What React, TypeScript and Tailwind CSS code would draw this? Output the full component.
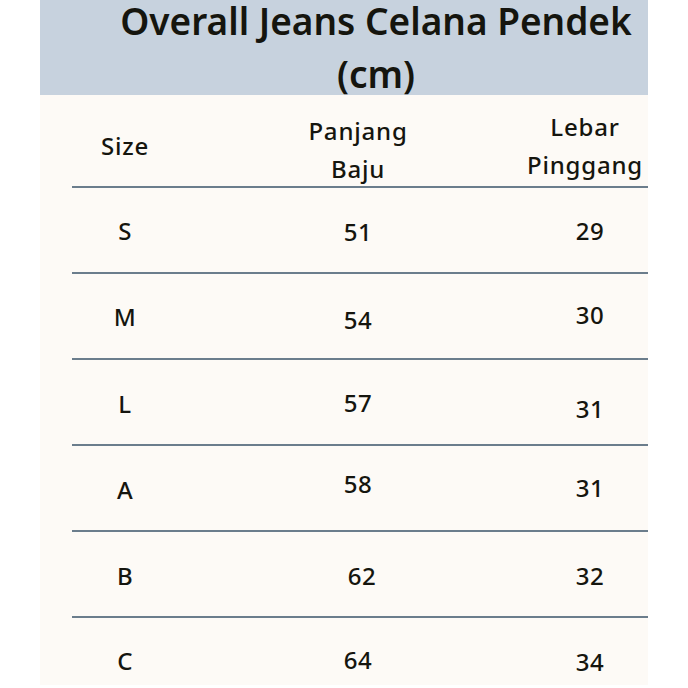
import React from 'react';

const rows = [
  { size: 'S', panjang: '51', lebar: '29', a: 'translate-y-[1px]', b: 'translate-y-[2px]', c: 'translate-y-[1px]' },
  { size: 'M', panjang: '54', lebar: '30', a: 'translate-y-[1px]', b: 'translate-y-[4px]', c: '-translate-y-[1px]' },
  { size: 'L', panjang: '57', lebar: '31', a: 'translate-y-[2px]', b: 'translate-y-[1px]', c: 'translate-y-[7px]' },
  { size: 'A', panjang: '58', lebar: '31', a: 'translate-y-[2px]', b: '-translate-y-[4px]', c: '' },
  { size: 'B', panjang: '62', lebar: '32', a: 'translate-y-[2px]', b: 'translate-y-[2px] translate-x-[4px]', c: 'translate-y-[2px]' },
  { size: 'C', panjang: '64', lebar: '34', a: 'translate-y-[1px]', b: '', c: 'translate-y-[2px]' },
];

const App: React.FC = () => {
  return (
    <div
      className="w-[688px] h-[688px] bg-white text-[#15150e] overflow-hidden"
      style={{ fontFamily: '"Noto Sans", "DejaVu Sans", sans-serif' }}
    >
      <div className="ml-[40px] w-[608px]">
        <div className="h-[95px] bg-[#c7d2de] pl-[64px]">
          <h1 className="flex flex-col items-center text-[37px] font-semibold">
            <span className="leading-[42px]">Overall Jeans Celana Pendek</span>
            <span className="leading-[42px] mt-[11px]">(cm)</span>
          </h1>
        </div>

        <div className="h-[590px] bg-[#fdfaf6] pl-[32px] overflow-hidden">
          <div className="grid grid-cols-[106px_360px_104px] h-[91px] pt-[10px] text-[24px] leading-[38px] font-medium tracking-[0.8px]">
            <div className="flex items-center justify-center">Size</div>
            <div className="flex flex-col items-center justify-center translate-y-[4px]">
              <span>Panjang</span>
              <span>Baju</span>
            </div>
            <div className="flex flex-col items-center justify-center -translate-x-[5px]">
              <span>Lebar</span>
              <span>Pinggang</span>
            </div>
          </div>

          {rows.map((row) => (
            <div
              key={row.size}
              className="grid grid-cols-[106px_360px_104px] h-[86px] border-t-2 border-[#6b7d8c] text-[24px] font-medium tracking-[0.5px]"
            >
              <div className={`flex items-center justify-center ${row.a}`}>{row.size}</div>
              <div className={`flex items-center justify-center ${row.b}`}>{row.panjang}</div>
              <div className={`flex items-center justify-center ${row.c}`}>{row.lebar}</div>
            </div>
          ))}
        </div>
      </div>
    </div>
  );
};

export default App;
